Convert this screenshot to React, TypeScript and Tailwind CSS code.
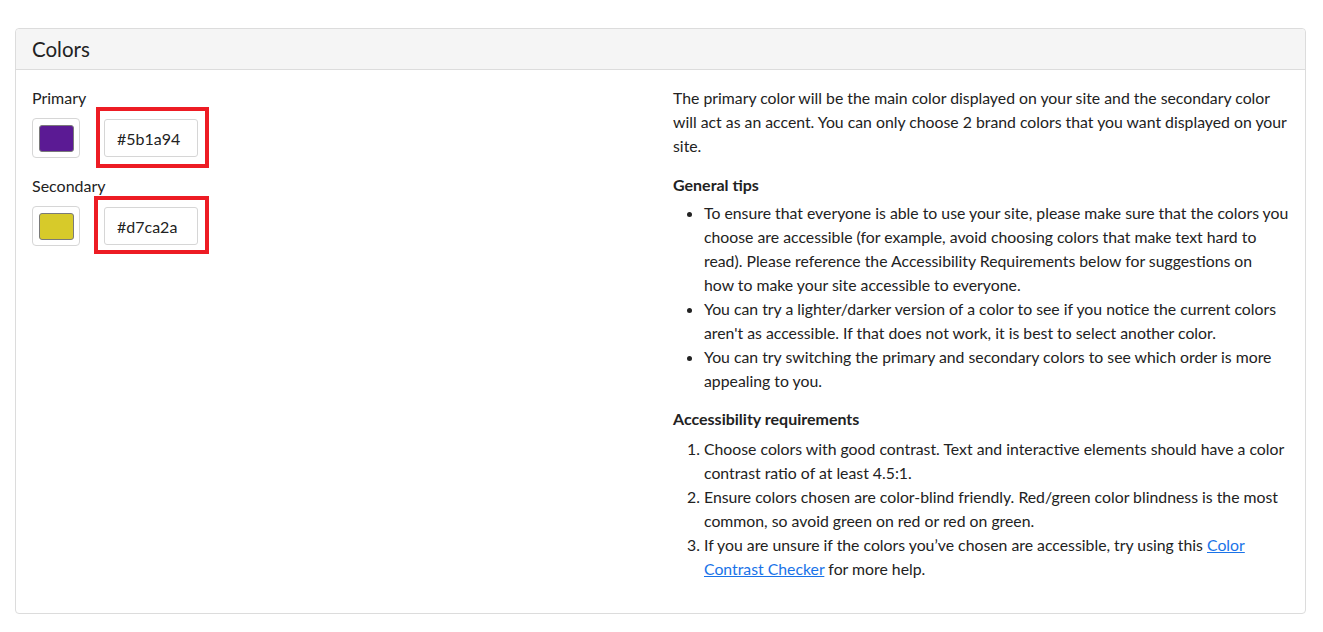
import React from 'react';

interface ColorRowProps {
  label: string;
  value: string;
  highlight: string;
}

const ColorRow: React.FC<ColorRowProps> = ({ label, value, highlight }) => {
  return (
    <div className="mb-[16px]">
      <div className="text-[16px] leading-[24px] mb-[8px]">{label}</div>
      <div className="flex items-center gap-[24px]">
        <div className="w-[48px] h-[40px] border border-[#d6d6d6] rounded-[4px] flex items-center justify-center bg-white">
          <div className="w-[35px] h-[27px] rounded-[3px] border border-[#7a7a7a]" style={{ backgroundColor: value }} />
        </div>
        <div className="relative">
          {/* red annotation box drawn over the input */}
          <div className={`absolute border-4 border-[#ed1c24] pointer-events-none ${highlight}`} />
          <input
            readOnly
            value={value}
            className="w-[94px] h-[38px] border border-[#d6d6d6] rounded-[3px] px-[12px] text-[16px] text-[#222] outline-none bg-white"
            style={{ fontFamily: 'Lato, sans-serif' }}
          />
        </div>
      </div>
    </div>
  );
};

export default function App() {
  return (
    <div className="bg-white w-[1323px] h-[632px] pt-[28px] pl-[15px] text-[#222]" style={{ fontFamily: 'Lato, "Open Sans", sans-serif' }}>
      <div className="w-[1291px] border border-[#dcdcdc] rounded-[4px]">
        {/* Header */}
        <div className="h-[41px] bg-[#f5f5f5] border-b border-[#dcdcdc] px-[16px] flex items-center rounded-t-[4px]">
          <h2 className="text-[20.5px] text-[#222]">Colors</h2>
        </div>

        {/* Body */}
        <div className="flex px-[16px] pt-[16px] pb-[16px]">
          {/* Left: pickers */}
          <div className="w-[641px] shrink-0">
            <ColorRow label="Primary" value="#5b1a94" highlight="left-[-8px] top-[-12px] right-[-11px] bottom-[-11px]" />
            <ColorRow label="Secondary" value="#d7ca2a" highlight="left-[-10px] top-[-11px] right-[-11px] bottom-[-9px]" />
          </div>

          {/* Right: guidance */}
          <div className="flex-1 text-[15.8px] leading-[24px]">
            <p>
              The primary color will be the main color displayed on your site and the secondary color will act as an accent. You can only choose 2 brand colors that you want displayed on your site.
            </p>

            <h3 className="font-bold text-[16px] mt-[15px] mb-[4px]">General tips</h3>
            <ul className="list-disc pl-[31px]">
              <li>
                To ensure that everyone is able to use your site, please make sure that the colors you choose are accessible (for example, avoid choosing colors that make text hard to read). Please reference the Accessibility Requirements below for suggestions on how{'\u00a0'}to make your site accessible to everyone.
              </li>
              <li>
                You can try a lighter/darker version of a color to see if you notice the current colors aren't as accessible. If that does not work, it is best to select another color.
              </li>
              <li>
                You can try switching the primary and secondary colors to see which order is more appealing to you.
              </li>
            </ul>

            <h3 className="font-bold text-[16px] mt-[14px] mb-[6px]">Accessibility requirements</h3>
            <ol className="list-decimal pl-[31px] mb-[16px]">
              <li>
                Choose colors with good contrast. Text and interactive elements should have a color contrast ratio of at least 4.5:1.
              </li>
              <li>
                Ensure colors chosen are color-blind friendly. Red/green color blindness is the most common, so avoid green on red or red on green.
              </li>
              <li>
                If you are unsure if the colors you’ve chosen are accessible, try using this{' '}
                <a href="#" className="text-[#1a73e8] underline">Color Contrast Checker</a> for more help.
              </li>
            </ol>
          </div>
        </div>
      </div>
    </div>
  );
}
